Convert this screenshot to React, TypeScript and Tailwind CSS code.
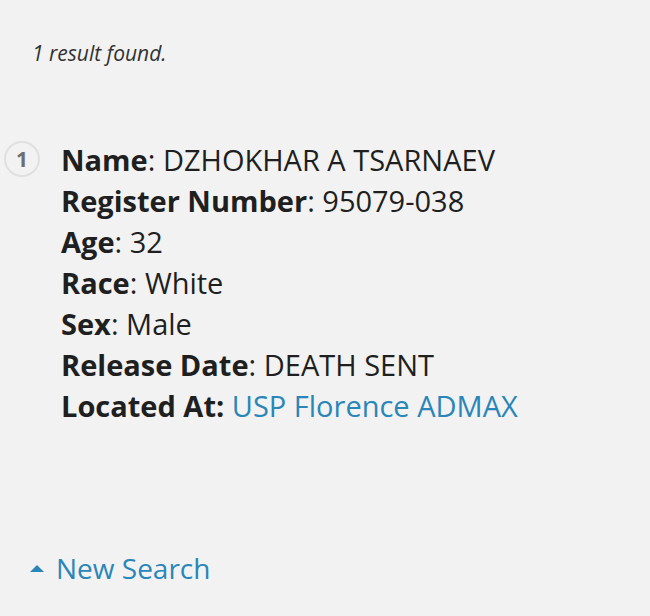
export default function App() {
  const rows: { label: string; value: string; link?: boolean; colonBold?: boolean }[] = [
    { label: "Name", value: "DZHOKHAR A TSARNAEV" },
    { label: "Register Number", value: "95079-038" },
    { label: "Age", value: "32" },
    { label: "Race", value: "White" },
    { label: "Sex", value: "Male" },
    { label: "Release Date", value: "DEATH SENT" },
    { label: "Located At:", value: "USP Florence ADMAX", link: true, colonBold: true },
  ];

  return (
    <div className="w-[650px] h-[616px] bg-[#f2f2f2] font-['Open_Sans',sans-serif] text-[#1f1f1f] overflow-hidden">
      <p className="pt-[39px] pl-[32px] text-[21px] italic text-[#333] leading-[28px]">1 result found.</p>

      <div className="mt-[72px] flex">
        <div className="ml-[4px] mt-[2px] shrink-0 w-[36px] h-[36px] rounded-full border-2 border-[#e0e0e0] flex items-center justify-center text-[21px] leading-none font-bold text-[#6e6e6e]">
          1
        </div>
        <ul className="ml-[21px]">
          {rows.map((r) => (
            <li key={r.label} className="text-[29px] leading-[41px] whitespace-nowrap">
              {r.colonBold ? (
                <>
                  <span className="font-bold">{r.label}</span>{" "}
                </>
              ) : (
                <>
                  <span className="font-bold">{r.label}</span>:{" "}
                </>
              )}
              {r.link ? <a className="text-[#2a86b8]">{r.value}</a> : r.value}
            </li>
          ))}
        </ul>
      </div>

      <div className="mt-[122px] pl-[30px] flex items-center gap-[12px]">
        <span className="w-0 h-0 border-l-[7px] border-r-[7px] border-b-[7px] border-l-transparent border-r-transparent border-b-[#2a86b8]" />
        <a className="text-[28px] text-[#2a86b8] leading-[40px]">New Search</a>
      </div>
    </div>
  );
}
